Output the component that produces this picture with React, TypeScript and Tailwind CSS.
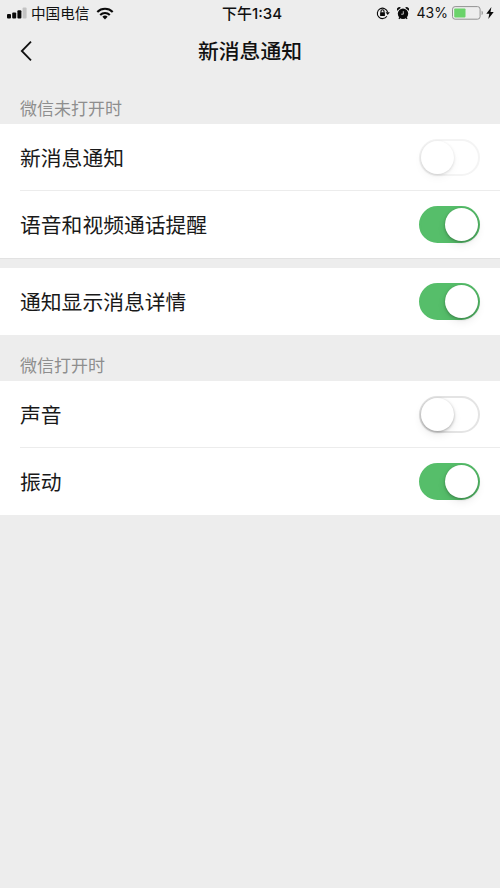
import { useState } from 'react';
import clsx from 'clsx';

type SwitchTone = 'strong' | 'faint';

interface SettingItem {
  label: string;
  defaultOn: boolean;
  tone?: SwitchTone;
}

interface SettingRowProps extends SettingItem {
  divided: boolean;
}

const closedItems: SettingItem[] = [
  { label: '新消息通知', defaultOn: false, tone: 'faint' },
  { label: '语音和视频通话提醒', defaultOn: true },
];

const detailItems: SettingItem[] = [{ label: '通知显示消息详情', defaultOn: true }];

const openItems: SettingItem[] = [
  { label: '声音', defaultOn: false },
  { label: '振动', defaultOn: true },
];

function SignalIcon() {
  return (
    <svg width="20" height="12" viewBox="0 0 20 12" fill="#0a0a0a">
      <rect x="0" y="7" width="4" height="4.5" rx="1" />
      <rect x="5.2" y="5.5" width="4" height="6" rx="1" />
      <rect x="10.4" y="3.3" width="4" height="8.2" rx="1" />
      <rect x="15.6" y="0.5" width="4" height="11" rx="1" fill="#c3c3c3" />
    </svg>
  );
}

function WifiIcon() {
  return (
    <svg width="18" height="13" viewBox="0 0 18 13" fill="none" stroke="#0a0a0a" strokeWidth="2.1">
      <path d="M1.3 4.9a11 11 0 0 1 15.4 0" />
      <path d="M4.2 7.9a6.9 6.9 0 0 1 9.6 0" />
      <path d="M9 12.4 6.4 9.8a3.8 3.8 0 0 1 5.2 0z" fill="#0a0a0a" stroke="none" />
    </svg>
  );
}

function RotationLockIcon() {
  return (
    <svg width="14" height="14" viewBox="0 0 14 14" fill="none" stroke="#0a0a0a" strokeWidth="1.1">
      <path d="M10.9 10.2A5.2 5.2 0 1 1 11.6 6.2" />
      <path d="M9.6 6.2h4.2l-2.1 2.7z" fill="#0a0a0a" stroke="none" />
      <path d="M5 6.4V5.3a1.5 1.5 0 0 1 3 0v1.1" />
      <rect x="4.1" y="6.2" width="4.8" height="3.7" rx="0.5" fill="#0a0a0a" stroke="none" />
    </svg>
  );
}

function AlarmIcon() {
  return (
    <svg width="12" height="13" viewBox="0 0 12 13" fill="#0a0a0a">
      <circle cx="6" cy="6.8" r="5.2" />
      <path d="M0.2 3.8A2.4 2.4 0 0 1 3.9 0.8zM11.8 3.8A2.4 2.4 0 0 0 8.1 0.8z" />
      <path d="M2.8 10.4 2 11.9M9.2 10.4l.8 1.5" stroke="#0a0a0a" strokeWidth="1.2" />
      <path d="M6.3 4.2v3H4.2" stroke="#ededed" strokeWidth="0.8" fill="none" />
    </svg>
  );
}

function BatteryIcon() {
  return (
    <svg width="32" height="14" viewBox="0 0 32 14" fill="none">
      <rect x="0.5" y="0.6" width="27.6" height="12.6" rx="2.6" stroke="#929292" />
      <rect x="2.2" y="2.4" width="11.3" height="9" rx="0.8" fill="#6bd36b" />
      <path d="M29.6 4.7c1.7.6 1.7 3.8 0 4.4z" fill="#929292" />
    </svg>
  );
}

function BoltIcon() {
  return (
    <svg width="8" height="12" viewBox="0 0 8 12" fill="#0a0a0a">
      <path d="M5.4 0 0.3 6.7h3L2.3 12 7.7 4.9H4.5z" />
    </svg>
  );
}

function StatusBar() {
  return (
    <div className="grid h-[26px] grid-cols-[1fr_auto_1fr] items-center pr-[6px] pl-[7px] text-[14.6px] leading-none text-[#111]">
      <div className="flex items-center">
        <SignalIcon />
        <span className="ml-1 pt-0.5">中国电信</span>
        <span className="ml-[7px]">
          <WifiIcon />
        </span>
      </div>
      <span className="ml-[3px] pt-px text-[15px] font-medium">下午1:34</span>
      <div className="flex items-center justify-end">
        <RotationLockIcon />
        <span className="ml-[7px]">
          <AlarmIcon />
        </span>
        <span className="ml-2 text-[14px]">43%</span>
        <span className="ml-1">
          <BatteryIcon />
        </span>
        <span className="ml-[2px]">
          <BoltIcon />
        </span>
      </div>
    </div>
  );
}

function NavBar() {
  return (
    <header className="grid h-[50px] grid-cols-[60px_1fr_60px] items-center">
      <button type="button" aria-label="返回" className="pl-5">
        <svg width="13" height="22" viewBox="0 0 13 22" fill="none" stroke="#111" strokeWidth="1.8">
          <path d="M11 1.6 1.8 11l9.2 9.4" />
        </svg>
      </button>
      <h1 className="pt-[3px] text-center text-[20.8px] leading-none font-medium text-[#111]">新消息通知</h1>
    </header>
  );
}

function Switch({ on, tone = 'strong', onToggle, label }: {
  on: boolean;
  tone?: SwitchTone;
  onToggle: () => void;
  label: string;
}) {
  return (
    <button
      type="button"
      role="switch"
      aria-checked={on}
      aria-label={label}
      onClick={onToggle}
      className={clsx(
        'flex h-[37px] w-[61px] items-center rounded-full border-2',
        on && 'justify-end border-[#56be6a] bg-[#56be6a]',
        !on && tone === 'strong' && 'border-[#e4e4e4] bg-white',
        !on && tone === 'faint' && 'border-[#f4f4f4] bg-white',
      )}
    >
      <span
        className={clsx(
          'size-[33px] rounded-full bg-white',
          tone === 'strong'
            ? 'shadow-[0_1px_3px_rgba(0,0,0,0.3),0_4px_8px_rgba(0,0,0,0.08)]'
            : 'shadow-[0_1px_3px_rgba(0,0,0,0.14),0_4px_8px_rgba(0,0,0,0.04)]',
        )}
      />
    </button>
  );
}

function SettingRow({ label, defaultOn, tone, divided }: SettingRowProps) {
  const [on, setOn] = useState(defaultOn);

  return (
    <li className="pl-5">
      <div
        className={clsx(
          'flex h-[67px] items-center justify-between border-b pr-5',
          divided ? 'border-[#ececec]' : 'border-transparent',
        )}
      >
        <span className="pt-[5px] text-[20.8px] leading-none text-[#191919]">{label}</span>
        <Switch on={on} tone={tone} label={label} onToggle={() => setOn(!on)} />
      </div>
    </li>
  );
}

function SettingGroup({ items }: { items: SettingItem[] }) {
  return (
    <ul className="bg-white">
      {items.map((item, i) => (
        <SettingRow key={item.label} {...item} divided={i < items.length - 1} />
      ))}
    </ul>
  );
}

function App() {
  return (
    <div className="min-h-[888px] w-full bg-[#ededed] font-[Inter,'Noto_Sans_CJK_SC',sans-serif]">
      <StatusBar />
      <NavBar />

      {/* While the app is closed */}
      <h2 className="flex h-12 items-end px-5 pb-[6px] text-[17px] leading-[18px] text-[#8e8e8e]">微信未打开时</h2>
      <SettingGroup items={closedItems} />
      <div className="h-[10px] border-t border-[#e2e2e2]" />
      <SettingGroup items={detailItems} />

      {/* While the app is open */}
      <h2 className="flex h-[46px] items-end px-5 pb-[6px] text-[17px] leading-[18px] text-[#8e8e8e]">微信打开时</h2>
      <SettingGroup items={openItems} />
    </div>
  );
}

export default App;
